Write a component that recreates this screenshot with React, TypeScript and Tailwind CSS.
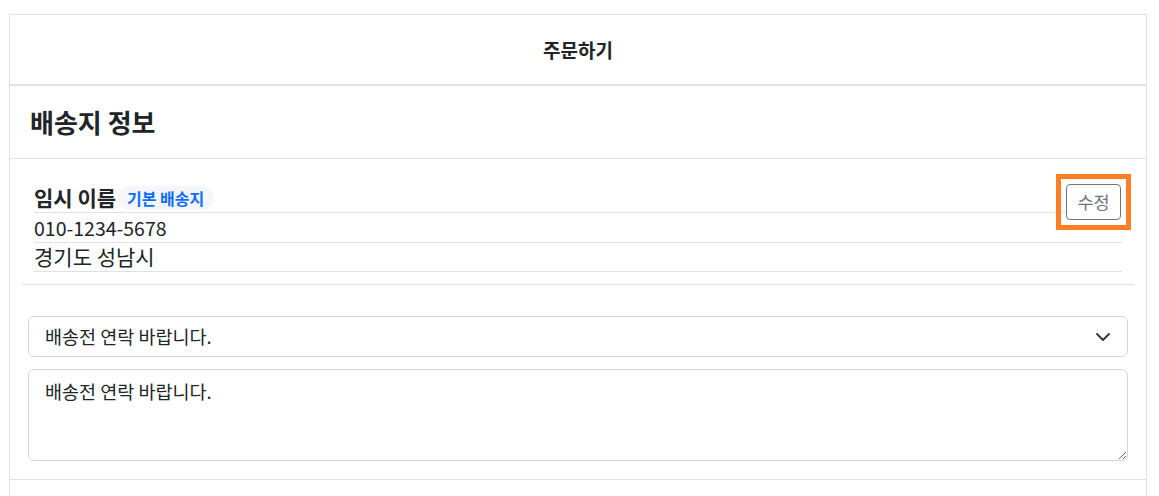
import React from "react";

export default function App() {
  return (
    <div
      className="w-[1159px] h-[496px] overflow-hidden bg-white text-[#212529]"
      style={{ fontFamily: '"Noto Sans CJK KR", "Noto Sans", sans-serif' }}
    >
      <div className="ml-[9px] mt-[14px] w-[1138px] h-[600px] border border-[#dee2e6]">
        {/* Header */}
        <div className="h-[71px] flex items-center justify-center border-b-2 border-[#dee2e6]">
          <span className="text-[19px] font-bold leading-none">주문하기</span>
        </div>

        {/* Section title */}
        <div className="h-[73px] flex items-center pl-[20px] border-b border-[#dee2e6]">
          <h4 className="text-[26px] font-bold leading-none">배송지 정보</h4>
        </div>

        {/* Address card */}
        <div className="relative mx-3 pt-6 px-3 pb-3 border-b border-[#dee2e6]">
          <div className="h-[30px] flex items-center border-b border-[#dee2e6]">
            <span className="text-[21px] font-bold leading-none">임시 이름</span>
            <span className="ml-[2px] h-[24px] px-[9px] flex items-center rounded-full bg-[#f4f6fa] text-[16px] font-semibold text-[#0d6efd] leading-none">
              기본 배송지
            </span>
          </div>
          <div className="h-[30px] flex items-center border-b border-[#dee2e6] text-[19.5px] leading-none">
            010-1234-5678
          </div>
          <div className="h-[29px] flex items-center border-b border-[#dee2e6] text-[21px] leading-none pb-[2px]">
            경기도 성남시
          </div>
          <div className="absolute top-[15px] right-[3px] border-[5px] border-[#fd7e23] p-[5px]">
            <button
              type="button"
              className="w-[55px] h-[36px] flex items-center justify-center rounded-[4px] border border-[#6c757d] text-[17.5px] text-[#6c757d] leading-none bg-white"
            >
              수정
            </button>
          </div>
        </div>

        {/* Memo */}
        <div className="pt-[31px] pb-[18px] px-[18px] border-b border-[#dee2e6] flex flex-col gap-3">
          <div className="relative">
            <select
              className="w-full h-[41px] appearance-none rounded-md border border-[#d4d8dd] bg-white pl-4 pr-10 text-[18.5px] text-[#212529] outline-none"
              style={{ fontFamily: '"Noto Sans CJK KR", "Noto Sans", sans-serif' }}
              defaultValue="a"
            >
              <option value="a">배송전 연락 바랍니다.</option>
            </select>
            <svg
              className="pointer-events-none absolute right-[17px] top-[16px]"
              width="16"
              height="10"
              viewBox="0 0 16 10"
              fill="none"
            >
              <path d="M2 2l6 6 6-6" stroke="#343a40" strokeWidth="2" strokeLinecap="round" strokeLinejoin="round" />
            </svg>
          </div>
          <textarea
            className="w-full h-[92px] block rounded-md border border-[#d4d8dd] bg-white px-4 py-[8px] text-[18.5px] leading-[26px] text-[#212529] outline-none"
            style={{ fontFamily: '"Noto Sans CJK KR", "Noto Sans", sans-serif' }}
            defaultValue="배송전 연락 바랍니다."
          />
        </div>
      </div>
    </div>
  );
}
